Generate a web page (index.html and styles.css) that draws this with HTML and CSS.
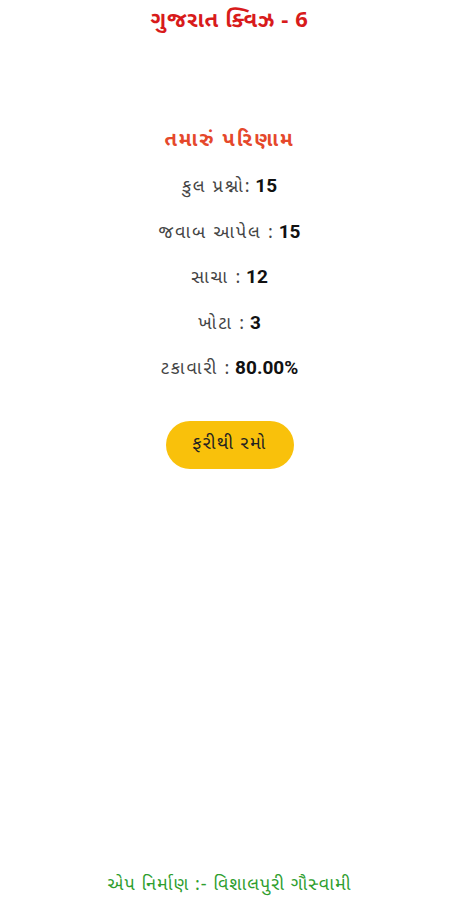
FILE: index.html
```html
<!DOCTYPE html>
<html lang="gu">
<head>
<meta charset="utf-8">
<title>ગુજરાત ક્વિઝ - 6</title>
<link rel="stylesheet" href="styles.css">
</head>
<body>
<div class="screen">
  <header class="title">ગુજરાત ક્વિઝ - 6</header>
  <main class="result">
    <h2 class="result-head">તમારું પરિણામ</h2>
    <p class="row">કુલ પ્રશ્નો:<b>15</b></p>
    <p class="row">જવાબ આપેલ :<b>15</b></p>
    <p class="row">સાચા :<b>12</b></p>
    <p class="row">ખોટા :<b>3</b></p>
    <p class="row">ટકાવારી :<b>80.00%</b></p>
    <button class="again">ફરીથી રમો</button>
  </main>
  <footer class="credit">એપ નિર્માણ :- વિશાલપુરી ગૌસ્વામી</footer>
</div>
</body>
</html>
```
FILE: styles.css
```css
html, body {
  margin: 0;
  padding: 0;
  background: #ffffff;
}
body {
  font-family: "Noto Sans Gujarati", "Noto Sans", Roboto, "DejaVu Sans", sans-serif;
}
.screen {
  width: 459px;
  height: 900px;
  display: flex;
  flex-direction: column;
  align-items: center;
}
.title {
  margin-top: 7px;
  height: 30px;
  line-height: 30px;
  font-size: 22px;
  font-weight: 700;
  letter-spacing: 0.6px;
  color: #d81b1b;
}
.result {
  display: flex;
  flex-direction: column;
  align-items: center;
  margin-top: 88px;
}
.result-head {
  margin: 0;
  height: 32px;
  line-height: 32px;
  font-size: 20px;
  font-weight: 700;
  letter-spacing: 2px;
  color: #e5482b;
}
.row {
  margin: 13.4px 0 0;
  height: 32px;
  line-height: 32px;
  font-size: 18px;
  letter-spacing: 1.8px;
  color: #444444;
}
.row b {
  margin-left: 4px;
  letter-spacing: 0;
  color: #111111;
  font-family: Roboto, "Noto Sans", sans-serif;
  font-size: 19px;
}
.again {
  margin-top: 37px;
  width: 128px;
  height: 48px;
  border: none;
  border-radius: 24px;
  background: #f9c10b;
  color: #222222;
  font-family: inherit;
  font-size: 18px;
  letter-spacing: 1.4px;
}
.credit {
  margin-top: auto;
  height: 28px;
  line-height: 28px;
  font-size: 18px;
  letter-spacing: 1px;
  color: #2e9e2e;
}
```
